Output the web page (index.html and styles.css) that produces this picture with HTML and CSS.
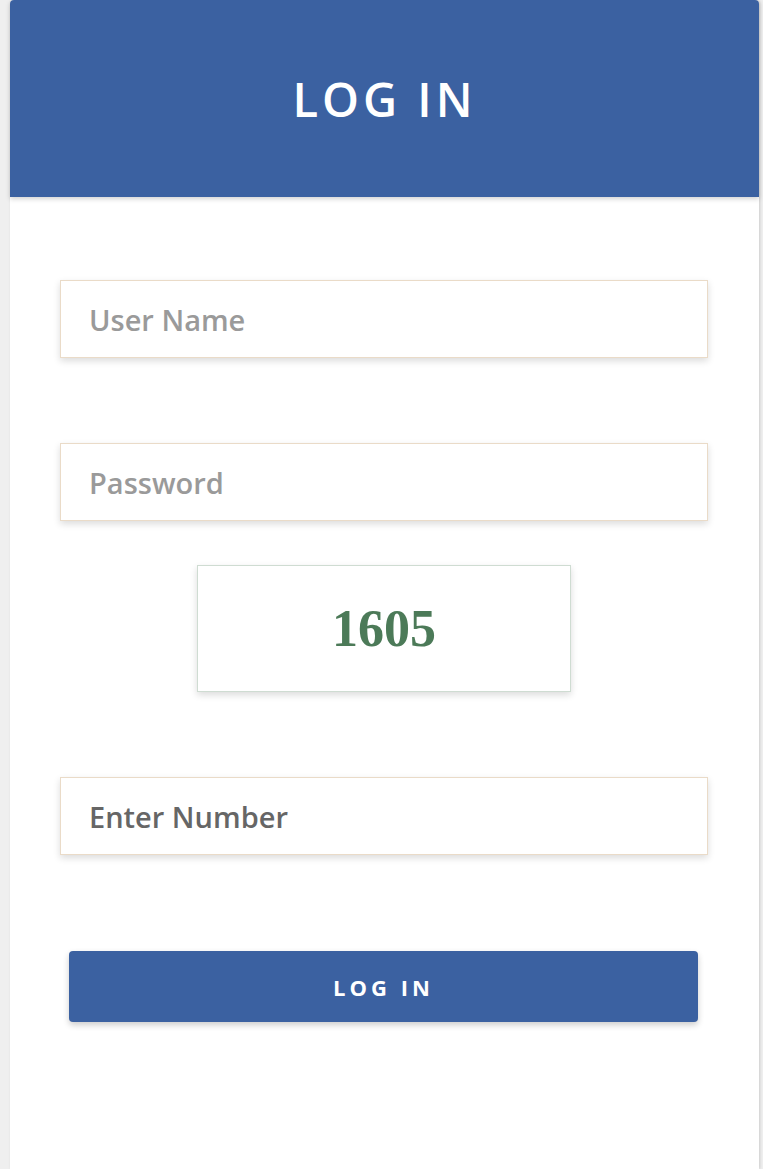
FILE: index.html
```html
<!DOCTYPE html>
<html>
<head>
	<title>Log In</title>
	<link rel="stylesheet" href="styles.css">
</head>
<body>
	<div class="login-card">
		<div class="login-header">
			<h1 class="login-title">LOG IN</h1>
		</div>

		<form class="login-form">
			<input type="text" class="login-input" name="username" placeholder="User Name">
			<input type="password" class="login-input" name="password" placeholder="Password">

			<div class="captcha-box">
				<span class="captcha-code">1605</span>
			</div>

			<input type="text" class="login-input number-input" name="number" placeholder="Enter Number">

			<button type="submit" class="login-submit">LOG IN</button>
		</form>
	</div>
</body>
</html>
```

FILE: styles.css
```css
body {
	margin: 0;
	background-color: #efefef;
	font-family: "Open Sans", Arial, sans-serif;
}
.login-card {
	margin-left: 10px;
	width: 749px;
	min-height: 1169px;
	background-color: #fff;
	border-radius: 4px 4px 0 0;
	box-shadow: 1px 0 3px rgba(0,0,0,0.15);
}
.login-header {
	height: 197px;
	display: flex;
	align-items: center;
	justify-content: center;
	background-color: #3b61a1;
	border-radius: 4px 4px 0 0;
	box-shadow: 0 2px 5px rgba(0,0,0,0.18);
}
.login-title {
	margin: 0;
	color: #fff;
	font-size: 47px;
	font-weight: 600;
	letter-spacing: 4px;
}
.login-form {
	display: flex;
	flex-direction: column;
	padding: 83px 51px 0 50px;
}
.login-input {
	height: 78px;
	box-sizing: border-box;
	padding: 0 28px;
	border: 1px solid #eadbc8;
	background-color: #fff;
	box-shadow: 0 3px 7px rgba(0,0,0,0.14);
	font-family: "Open Sans", Arial, sans-serif;
	font-size: 29px;
	font-weight: 600;
	color: #555;
	outline: none;
}
.login-input + .login-input {
	margin-top: 85px;
}
.login-input::placeholder {
	color: #9a9a9a;
}
.number-input::placeholder {
	color: #666;
}
.captcha-box {
	align-self: center;
	width: 374px;
	height: 127px;
	box-sizing: border-box;
	margin-top: 44px;
	margin-bottom: 85px;
	display: flex;
	align-items: center;
	justify-content: center;
	border: 1px solid #cfdcd2;
	box-shadow: 0 3px 7px rgba(0,0,0,0.14);
}
.captcha-code {
	font-family: "Liberation Serif", "Times New Roman", serif;
	font-size: 52px;
	font-weight: bold;
	color: #4c7a58;
}
.login-submit {
	margin: 96px 10px 0 9px;
	height: 71px;
	border: none;
	border-radius: 4px;
	background-color: #3b61a1;
	color: #fff;
	font-family: "Open Sans", Arial, sans-serif;
	font-size: 22px;
	font-weight: 700;
	letter-spacing: 4px;
	box-shadow: 0 3px 6px rgba(0,0,0,0.2);
	cursor: pointer;
}
```
